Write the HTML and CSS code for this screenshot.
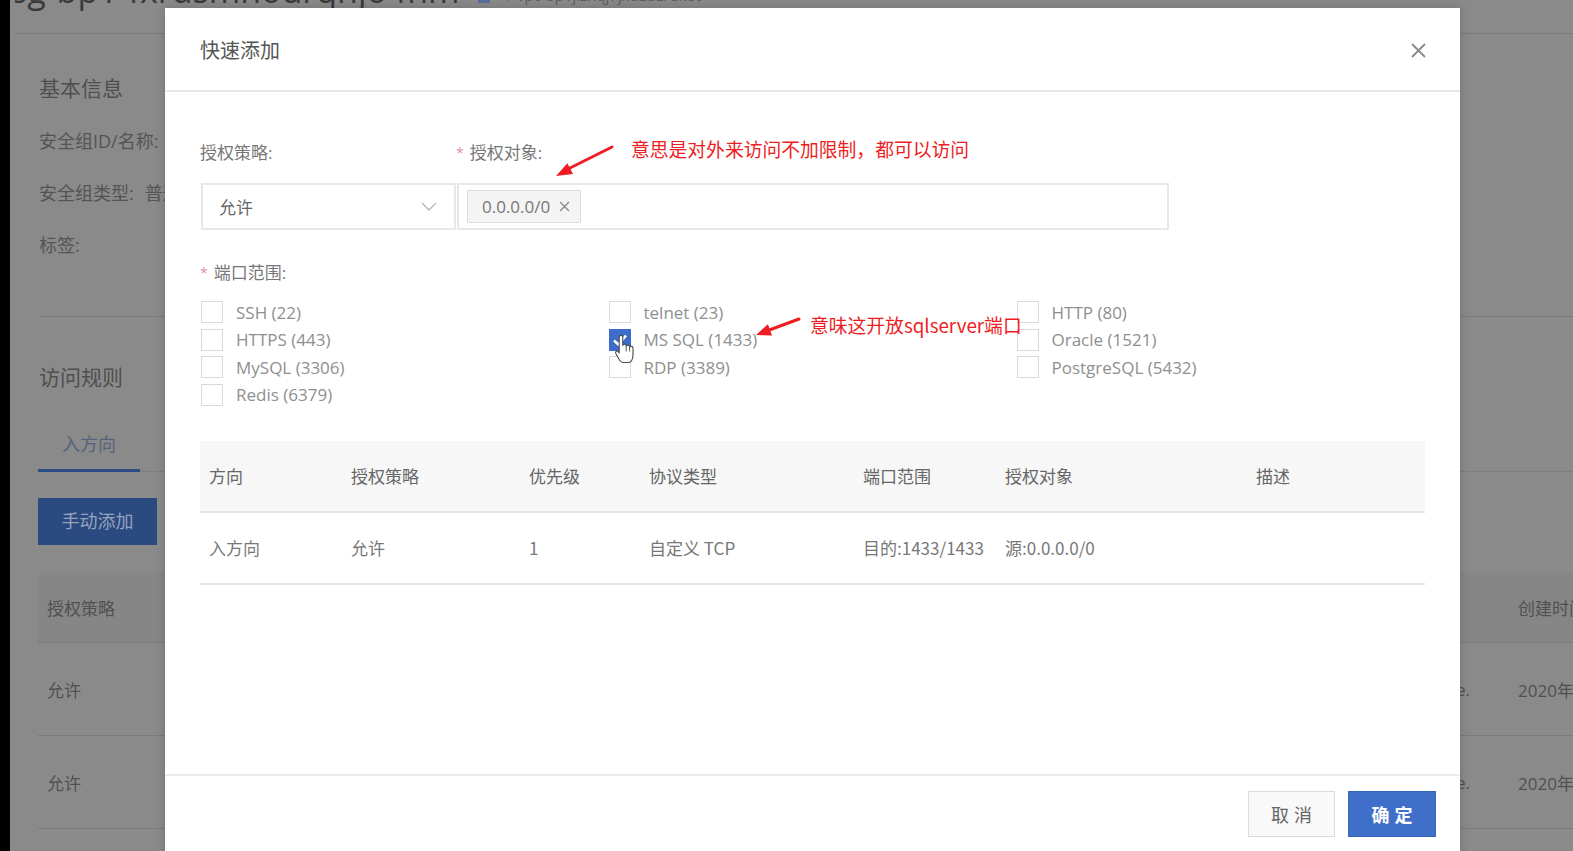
FILE: index.html
```html
<!DOCTYPE html>
<html lang="zh-CN">
<head>
<meta charset="utf-8">
<title>快速添加</title>
<link rel="stylesheet" href="styles.css">
</head>
<body>
<div class="screen">
  <div class="edge"></div>
  <main class="page">
    <div class="page-title">
      <span class="big">sg-bp1-fxrdsmhourqnjo fnm</span>
      <span class="edit-icon"></span>
      <span class="crumb">/ vpc-bp1jiznqj7jxu2bzrukot</span>
    </div>
    <section class="info">
      <h2 class="sec-title">基本信息</h2>
      <div class="info-rows">
        <div class="info-row">安全组ID/名称:</div>
        <div class="info-row">安全组类型:<span class="val">普通</span></div>
        <div class="info-row">标签:</div>
      </div>
    </section>
    <section class="rules">
      <h2 class="sec-title">访问规则</h2>
      <div class="tabbar"><div class="tab">入方向</div></div>
      <div class="add-btn">手动添加</div>
      <div class="bg-table">
        <div class="bg-row bg-head"><div class="bg-cell">授权策略</div><div class="bg-cell"></div><div class="bg-cell desc"></div><div class="bg-cell">创建时间</div></div>
        <div class="bg-row bg-body"><div class="bg-cell">允许</div><div class="bg-cell"></div><div class="bg-cell desc">System created rule.</div><div class="bg-cell">2020年6月</div></div>
        <div class="bg-row bg-body"><div class="bg-cell">允许</div><div class="bg-cell"></div><div class="bg-cell desc">System created rule.</div><div class="bg-cell">2020年6月</div></div>
      </div>
    </section>
  </main>
</div>

<div class="modal">
  <div class="modal-head">
    <div class="modal-title">快速添加</div>
    <svg class="close" width="15" height="15" viewBox="0 0 15 15"><path d="M1 1L14 14M14 1L1 14" stroke="#8a8a8a" stroke-width="1.8" fill="none"/></svg>
  </div>
  <div class="modal-body">
    <div class="form-grid">
      <div class="label">授权策略:</div>
      <div class="label"><span class="req">*</span>授权对象:</div>
      <div class="select">
        <span>允许</span>
        <svg width="16" height="9" viewBox="0 0 16 9"><polyline points="1,1 8,8 15,1" fill="none" stroke="#b3b3b3" stroke-width="1.3"/></svg>
      </div>
      <div class="tagbox">
        <span class="tag">0.0.0.0/0<svg width="11" height="11" viewBox="0 0 11 11"><path d="M1 1L10 10M10 1L1 10" stroke="#8a8a8a" stroke-width="1.4"/></svg></span>
      </div>
    </div>
    <div class="label port-label"><span class="req">*</span>端口范围:</div>
    <div class="ports">
      <label class="port"><span class="box"></span><span>SSH (22)</span></label>
      <label class="port"><span class="box"></span><span>telnet (23)</span></label>
      <label class="port"><span class="box"></span><span>HTTP (80)</span></label>
      <label class="port"><span class="box"></span><span>HTTPS (443)</span></label>
      <label class="port"><span class="box on"><svg width="20" height="20" viewBox="0 0 20 20"><path d="M4 10.5L8.3 14.5L16 5.5" fill="none" stroke="#fff" stroke-width="2.6"/></svg></span><span>MS SQL (1433)</span></label>
      <label class="port"><span class="box"></span><span>Oracle (1521)</span></label>
      <label class="port"><span class="box"></span><span>MySQL (3306)</span></label>
      <label class="port"><span class="box"></span><span>RDP (3389)</span></label>
      <label class="port"><span class="box"></span><span>PostgreSQL (5432)</span></label>
      <label class="port"><span class="box"></span><span>Redis (6379)</span></label>
    </div>
    <div class="rules-table">
      <div class="t-row t-head">
        <div class="t-cell">方向</div><div class="t-cell">授权策略</div><div class="t-cell">优先级</div><div class="t-cell">协议类型</div><div class="t-cell">端口范围</div><div class="t-cell">授权对象</div><div class="t-cell">描述</div>
      </div>
      <div class="t-row t-body">
        <div class="t-cell">入方向</div><div class="t-cell">允许</div><div class="t-cell">1</div><div class="t-cell">自定义 TCP</div><div class="t-cell">目的:1433/1433</div><div class="t-cell">源:0.0.0.0/0</div><div class="t-cell"></div>
      </div>
    </div>
  </div>
  <div class="modal-foot">
    <div class="btn btn-cancel">取消</div>
    <div class="btn btn-ok">确定</div>
  </div>
</div>

<svg class="marks" width="1573" height="851" viewBox="0 0 1573 851">
  <line x1="612" y1="147" x2="568" y2="169" stroke="#ee1d23" stroke-width="3" stroke-linecap="round"/>
  <polygon points="556,176 573,174 567.4,163.3" fill="#ee1d23"/>
  <line x1="799" y1="319" x2="768" y2="330.5" stroke="#ee1d23" stroke-width="3" stroke-linecap="round"/>
  <polygon points="756,335 772.1,335.4 767.9,324.2" fill="#ee1d23"/>
  <g transform="translate(614,334)">
    <path d="M5.2,3 C5.2,0.8 8.8,0.8 8.8,3 L8.8,11.5 C8.8,9.8 12.2,9.8 12.2,11.8 L12.2,12.5 C12.2,10.8 15.6,10.8 15.6,12.8 L15.6,13.6 C15.6,11.9 19,11.9 19,13.8 L19,21 C19,25 17.2,28.5 14.5,28.5 L9,28.5 C7.5,28.5 6.5,27.5 5.5,26 L1.8,19.5 C1,18 2.8,16.3 4,17.4 L5.2,19 Z" fill="#fff" stroke="#4a4a4a" stroke-width="1.1" stroke-linejoin="round"/>
    <path d="M12.2,12.5 V17.5 M15.6,13.6 V17.5" stroke="#4a4a4a" stroke-width="0.9" fill="none"/>
  </g>
</svg>
<div class="note note1">意思是对外来访问不加限制，都可以访问</div>
<div class="note note2">意味这开放sqlserver端口</div>
</body>
</html>
```

FILE: styles.css
```css
* { box-sizing: border-box; margin: 0; padding: 0; }
html, body { width: 1573px; height: 851px; overflow: hidden; }
body {
  position: relative;
  font-family: "Open Sans", "Noto Sans CJK SC", sans-serif;
  background: #8a8a8a;
  color: #505050;
}

/* ---------- background page (under the mask) ---------- */
.screen { display: flex; height: 851px; }
.edge { width: 10px; flex: none; background: #000; }
.page { flex: 1; min-width: 0; overflow: hidden; }

.page-title {
  height: 34px;
  margin-left: 5px;
  border-bottom: 1px solid #7b7b7b;
  display: flex;
  align-items: flex-start;
  white-space: nowrap;
  overflow: hidden;
}
.big {
  font-size: 34px;
  line-height: 34px;
  margin-top: -27px;
  margin-left: -4px;
  color: #3a3a3a;
}
.edit-icon {
  width: 12px;
  height: 3px;
  margin: 0 0 0 18px;
  background: #5b6f9c;
}
.crumb {
  font-size: 15px;
  line-height: 20px;
  margin: -15px 0 0 18px;
  color: #5e5e5e;
}

.sec-title {
  font-size: 21px;
  line-height: 28px;
  font-weight: 400;
  color: #4f4f4f;
}
.info {
  margin-left: 29px;
  padding-bottom: 45px;
  border-bottom: 1px solid #7b7b7b;
}
.info .sec-title { margin-top: 40px; }
.info-rows { margin-top: 13px; }
.info-row {
  font-size: 18px;
  line-height: 52px;
  white-space: nowrap;
  color: #545454;
}
.val { margin-left: 11px; }

.rules { margin-left: 28px; }
.rules .sec-title { margin-top: 46px; margin-left: 1px; }
.tabbar {
  margin-top: 14px;
  display: flex;
  border-bottom: 1px solid #7e7e7e;
}
.tab {
  width: 102px;
  text-align: center;
  padding: 27px 0 13px;
  font-size: 18px;
  line-height: 24px;
  color: #56627c;
  border-bottom: 3px solid #2b4b84;
  margin-bottom: -1px;
}
.add-btn {
  margin-top: 26px;
  width: 119px;
  height: 47px;
  background: #2b4a80;
  color: #95a3bf;
  font-size: 18px;
  line-height: 47px;
  text-align: center;
}
.bg-table { margin-top: 28px; }
.bg-row {
  display: grid;
  grid-template-columns: 300px 1fr 225px 55px;
  align-items: center;
  border-bottom: 1px solid #7b7b7b;
  font-size: 17px;
}
.bg-head { height: 70px; background: #868686; }
.bg-body { height: 93px; }
.bg-cell { white-space: nowrap; }
.bg-cell:first-child { padding-left: 9px; }
.bg-cell.desc { text-align: right; padding-right: 48px; overflow: hidden; }

/* ---------- modal ---------- */
.modal {
  position: absolute;
  left: 165px;
  top: 8px;
  width: 1295px;
  height: 880px;
  background: #fff;
  box-shadow: 0 0 10px rgba(0, 0, 0, 0.18);
  display: flex;
  flex-direction: column;
  color: #666;
}
.modal-head {
  height: 84px;
  flex: none;
  padding: 3px 34px 0 35px;
  display: flex;
  align-items: center;
  justify-content: space-between;
  border-bottom: 2px solid #e8e8e8;
}
.modal-title { font-size: 20px; line-height: 28px; color: #555; }

.modal-body { height: 682px; flex: none; padding: 0 35px; }
.form-grid {
  display: grid;
  grid-template-columns: 256px 713px;
  row-gap: 18px;
  padding-top: 49px;
}
.label { font-size: 17px; line-height: 24px; color: #777; }
.req {
  color: #e48fa1;
  font-size: 14px;
  margin-right: 6px;
  vertical-align: 1px;
}
.select {
  width: 255px;
  height: 47px;
  margin-left: 1px;
  border: 2px solid #e8e8e8;
  display: flex;
  align-items: center;
  justify-content: space-between;
  padding: 0 17px 0 16px;
  font-size: 17px;
  color: #666;
}
.tagbox {
  height: 47px;
  margin-left: 1px;
  border: 2px solid #e8e8e8;
  padding: 0 8px;
  display: flex;
  align-items: center;
}
.tag {
  height: 33px;
  padding: 0 10px 0 14px;
  background: #f4f4f4;
  border: 1px solid #dedede;
  display: flex;
  align-items: center;
  gap: 9px;
  font-size: 17px;
  color: #777;
}

.port-label { margin-top: 31px; }
.ports {
  margin-top: 13.5px;
  display: grid;
  grid-template-columns: 407.5px 408px 1fr;
  grid-auto-rows: 27.5px;
}
.port {
  display: flex;
  align-items: center;
  gap: 13px;
  font-size: 17px;
  line-height: 27.5px;
  color: #8f8f8f;
}
.box {
  width: 22px;
  height: 22px;
  margin-left: 1px;
  flex: none;
  border: 1px solid #d9d9d9;
  background: #fff;
}
.box.on {
  background: #3d6ccb;
  border-color: #3d6ccb;
  display: flex;
}

.rules-table { margin-top: 32px; font-family: "Noto Sans CJK SC", "Open Sans", sans-serif; }
.t-row {
  display: grid;
  grid-template-columns: 142px 178px 120px 214px 142px 251px 1fr;
  align-items: center;
  border-bottom: 2px solid #e6e6e6;
  font-size: 17px;
}
.t-head { height: 72px; background: #f7f7f7; color: #666; }
.t-body { height: 72px; color: #777; }
.t-cell { padding-left: 9px; white-space: nowrap; }

.modal-foot {
  border-top: 2px solid #ebebeb;
  padding: 15px 24px;
  display: flex;
  justify-content: flex-end;
  gap: 13px;
}
.btn {
  height: 46px;
  width: 87px;
  font-size: 18px;
  line-height: 44px;
  text-align: center;
  letter-spacing: 5px;
  text-indent: 5px;
  font-family: "Noto Sans CJK SC", sans-serif;
}
.btn-cancel { border: 1px solid #dcdcdc; background: #f9f9f9; color: #666; }
.btn-ok { width: 88px; background: #3f6fc9; border: 1px solid #3a68c0; color: #fff; font-weight: 700; }

/* ---------- annotations (drawn over the screenshot) ---------- */
.marks { position: absolute; left: 0; top: 0; pointer-events: none; }
.note {
  position: absolute;
  color: #ee1d23;
  font-family: "Noto Sans CJK SC", sans-serif;
  font-size: 18.8px;
  line-height: 24px;
  white-space: nowrap;
}
.note1 { left: 631px; top: 137px; }
.note2 { left: 810px; top: 313px; }
```
